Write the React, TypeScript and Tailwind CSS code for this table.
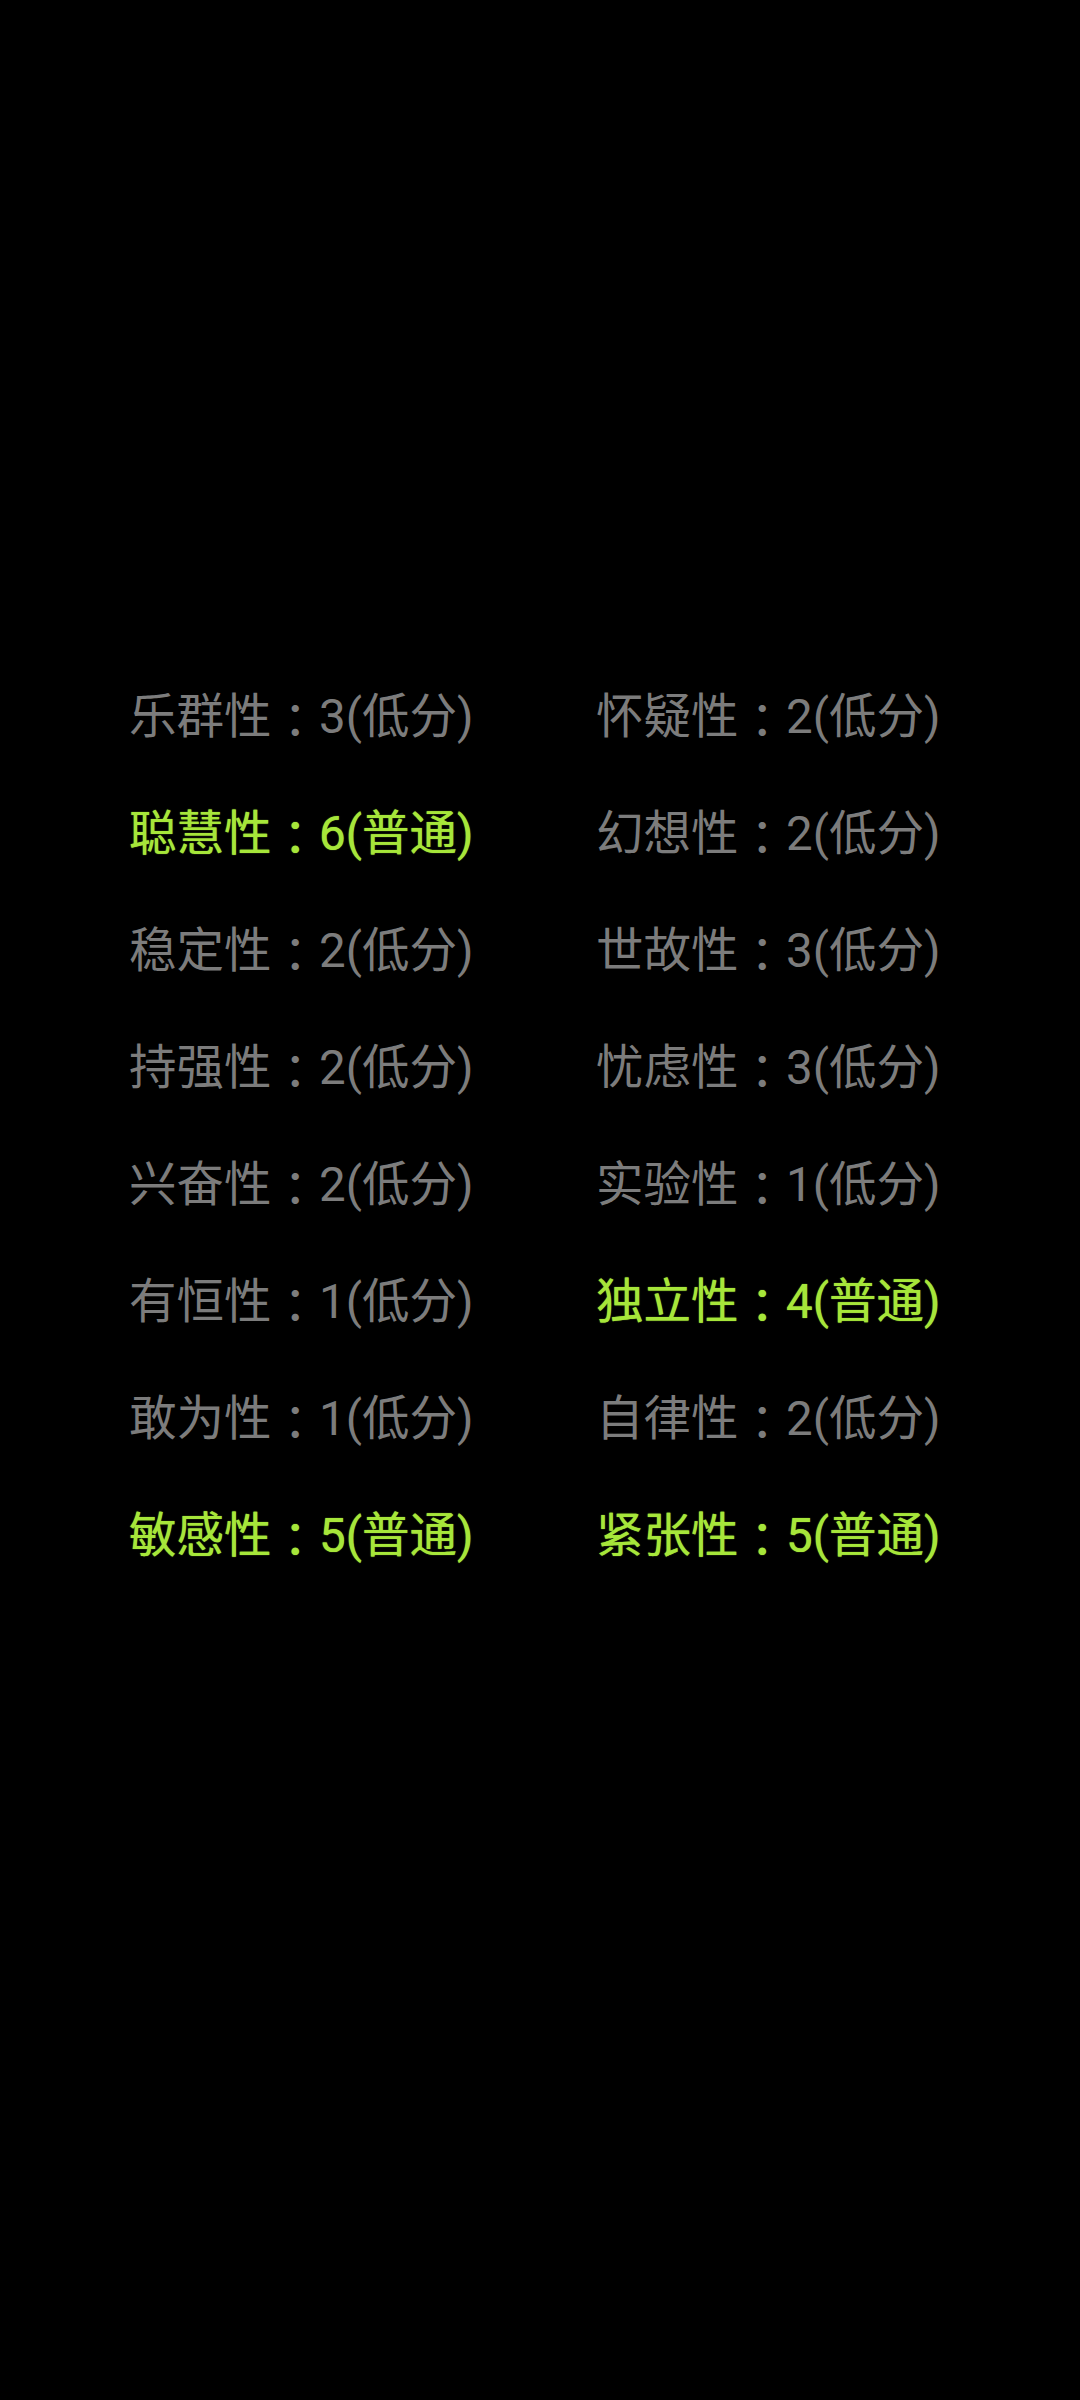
const ROWS: [string, number, string, number][] = [
  ["乐群性", 3, "怀疑性", 2],
  ["聪慧性", 6, "幻想性", 2],
  ["稳定性", 2, "世故性", 3],
  ["持强性", 2, "忧虑性", 3],
  ["兴奋性", 2, "实验性", 1],
  ["有恒性", 1, "独立性", 4],
  ["敢为性", 1, "自律性", 2],
  ["敏感性", 5, "紧张性", 5],
];

function Trait({ name, score }: { name: string; score: number }) {
  const normal = score >= 4;
  return (
    <div
      className={
        normal
          ? "flex h-[117px] items-center whitespace-nowrap text-[#a6e63a] [text-shadow:0_0_1px_#a6e63a]"
          : "flex h-[117px] items-center whitespace-nowrap text-[#7c7c7c]"
      }
    >
      <span>{name}</span>
      <span className="font-['Noto_Sans_CJK_TC',sans-serif]">：</span>
      <span>
        {score}({normal ? "普通" : "低分"})
      </span>
    </div>
  );
}

export default function App() {
  return (
    <div
      className="min-h-[2400px] w-[1080px] bg-black pl-[129px] pt-[659px] text-[47.5px] leading-none"
      style={{ fontFamily: '"Roboto", "Noto Sans CJK SC", sans-serif' }}
    >
      <div className="grid grid-cols-[467px_auto]">
        {ROWS.map(([a, sa, b, sb]) => (
          <div key={a} className="contents">
            <Trait name={a} score={sa} />
            <Trait name={b} score={sb} />
          </div>
        ))}
      </div>
    </div>
  );
}
